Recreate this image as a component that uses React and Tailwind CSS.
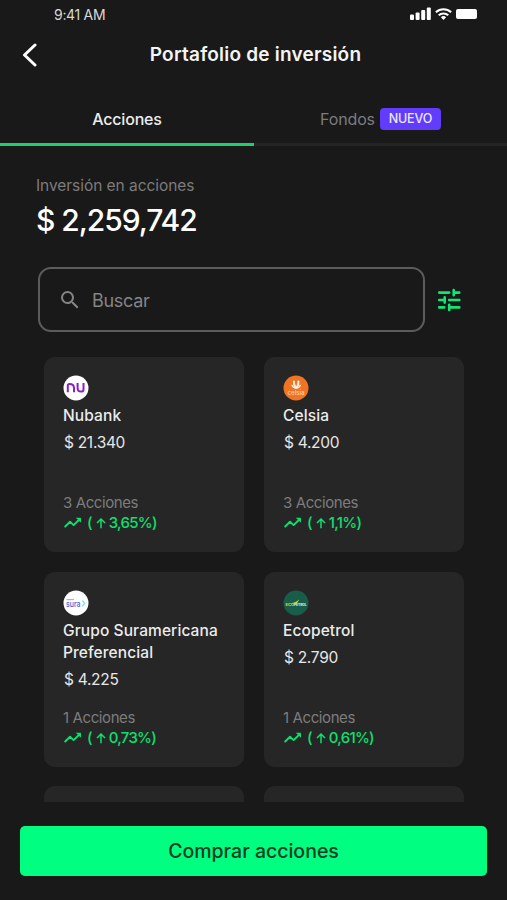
import React from 'react';
import { MdSearch } from 'react-icons/md';

const NuLogo = () => (
  <svg viewBox="0 0 26 26" className="size-[26px]" fill="none" aria-hidden="true">
    <circle cx="13" cy="13" r="12.5" fill="#fff" />
    <path d="M4.8 17.200V10.500c0-1 .6-1.600 1.700-1.600 2.700 0 4.500 1.600 4.500 4.200v4.100" stroke="#8a1fc4" strokeWidth="2" />
    <path d="M14.600 8v5c0 2.400 1.300 3.600 3.300 3.600 1.500 0 2.600-.6 2.600-2.200V8" stroke="#8a1fc4" strokeWidth="2" />
  </svg>
);

const CelsiaLogo = () => (
  <svg viewBox="0 0 26 26" className="size-[26px]" fill="none" aria-hidden="true">
    <circle cx="13" cy="13" r="12.5" fill="#f07424" />
    <g stroke="#fff3e8" strokeLinecap="round">
      <path d="M11 6.500c-.4 2.200.1 4 1.700 6M15.400 6.500c.4 2.200-.1 4-1.700 6" strokeWidth="2" />
      <path d="M9 10.300c.6 1.700 2 2.700 4.200 2.700s3.600-1 4.200-2.700" strokeWidth="1.300" />
    </g>
    <text x="4.500" y="20" fontSize="5.500" fontWeight="500" fill="#ffd0ac" fontFamily="Inter, sans-serif" textLength="17" lengthAdjust="spacingAndGlyphs">celsia</text>
  </svg>
);

const SuraLogo = () => (
  <svg viewBox="0 0 26 26" className="size-[26px]" fill="none" aria-hidden="true">
    <circle cx="13" cy="13" r="12.5" fill="#fff" />
    <path d="M3.500 9.600h7.500" stroke="#a9b2dc" strokeWidth="1.200" />
    <text x="3" y="16.600" fontSize="9" fontWeight="500" fill="#4d5bd2" fontFamily="Inter, sans-serif" textLength="14.500" lengthAdjust="spacingAndGlyphs">sura</text>
    <path d="m19.300 10.600 2.400 2.600-2.400 3.200" stroke="#8edfe4" strokeWidth="1.500" />
  </svg>
);

const EcopetrolLogo = () => (
  <svg viewBox="0 0 26 26" className="size-[26px]" fill="none" aria-hidden="true">
    <circle cx="13" cy="13" r="12.5" fill="#185c49" />
    <path d="M8 13.200c3.500-.4 5.600-1.500 8-3.700-.4 1.700-1.200 2.700-2.200 3.800Z" fill="#c9d530" />
    <text x="2.500" y="15.800" fontSize="3.600" fontWeight="800" fill="#c9d530" fontFamily="Inter, sans-serif" textLength="8.500" lengthAdjust="spacingAndGlyphs">ECO</text>
    <text x="11" y="15.800" fontSize="3.600" fontWeight="800" fill="#e2efdf" fontFamily="Inter, sans-serif" textLength="12.500" lengthAdjust="spacingAndGlyphs">PETROL</text>
  </svg>
);

const TrendIcon = () => (
  <svg viewBox="0 0 18 11" className="mr-[5px] mb-[2px] ml-px h-[11px] w-[18px]" fill="none" aria-hidden="true">
    <path d="M1.200 9.500 6 4.800l3.600 3.300 5-4.800" stroke="currentColor" strokeWidth="1.900" strokeLinecap="round" strokeLinejoin="round" />
    <path d="M11.800.8h4.700c.3 0 .5.200.5.500v4.500Z" fill="currentColor" />
  </svg>
);

const stocks = [
  { name: 'Nubank', price: '21.340', shares: 3, change: '3,65%', Logo: NuLogo },
  { name: 'Celsia', price: '4.200', shares: 3, change: '1,1%', Logo: CelsiaLogo },
  { name: 'Grupo Suramericana Preferencial', price: '4.225', shares: 1, change: '0,73%', Logo: SuraLogo },
  { name: 'Ecopetrol', price: '2.790', shares: 1, change: '0,61%', Logo: EcopetrolLogo },
];

const StockCard = ({ name, price, shares, change, Logo }) => (
  <div className="flex h-[195px] flex-col rounded-[11px] bg-[#262626] pt-[18px] pr-2 pb-[18px] pl-[19px]">
    <Logo />
    <h3 className="mt-[4px] text-[15.500px] leading-[22px] font-medium tracking-[0.100px] text-[#ececec]">{name}</h3>
    <p className="mt-[5px] ml-px text-[15.500px] leading-[22px] tracking-[-0.300px] text-[#e6e6e6]">$ {price}</p>
    <p className="mt-auto text-[15px] leading-[20px] tracking-[-0.400px] text-[#7c7c7c]">{shares} Acciones</p>
    <div className="flex h-[21px] items-center text-[15px] font-medium tracking-[-0.750px] text-[#0ce070]">
      <TrendIcon />
      <span>(</span>
      <svg viewBox="0 0 10 11" className="mr-[3px] ml-[4px] h-[11px] w-[10px]" fill="none" stroke="currentColor" strokeWidth="1.500" aria-hidden="true">
        <path d="M5 10.200V1.200M1 5l4-4 4 4" />
      </svg>
      <span>{change})</span>
    </div>
  </div>
);

const StatusBar = () => (
  <div className="flex h-7 items-center justify-between pr-[30px] pl-[54px]">
    <span className="text-[14px] tracking-[-0.300px] text-[#d8d8d8]">9:41 AM</span>
    <div className="mb-px flex items-center gap-[4px] text-white">
      <svg viewBox="0 0 21 13" className="h-[13px] w-[21px]" fill="currentColor" aria-hidden="true">
        <rect x="0" y="7.500" width="4" height="5.500" rx="1" />
        <rect x="5.600" y="5.500" width="4" height="7.500" rx="1" />
        <rect x="11.200" y="3" width="4" height="10" rx="1" />
        <rect x="16.800" y="0.500" width="4" height="12.500" rx="1" />
      </svg>
      <svg viewBox="0 0 17 12" className="h-[12px] w-[17px]" fill="none" stroke="currentColor" strokeWidth="2" aria-hidden="true">
        <path d="M.9 4.300a11 11 0 0 1 15.200 0M3.700 7.300a7 7 0 0 1 9.600 0" />
        <path d="M5.900 9.200 8.500 12l2.600-2.800a3.900 3.900 0 0 0-5.200 0Z" fill="currentColor" stroke="none" />
      </svg>
      <div className="h-[10px] w-[21px] rounded-[2px] bg-white" />
    </div>
  </div>
);

export default function App() {
  return (
    <div className="flex h-[900px] w-[507px] flex-col overflow-hidden bg-[#191919] font-['Inter',sans-serif]">
      <StatusBar />

      <header className="flex h-[54px] items-center">
        <button className="ml-[22px] flex w-4 justify-center" aria-label="Volver">
          <svg viewBox="0 0 16 24" className="h-6 w-4" fill="none" stroke="#fff" strokeWidth="3" strokeLinecap="round" aria-hidden="true">
            <path d="M13 2 2.500 12 13 22" strokeLinejoin="round" />
          </svg>
        </button>
        <h1 className="flex-1 pr-[34px] text-center text-[19px] font-semibold tracking-[0.220px] text-[#f4f4f4]">Portafolio de inversión</h1>
      </header>

      <nav className="mt-3 flex h-[52px] text-[16px]">
        <button className="w-[254px] border-b-[3px] border-[#1fcd72] font-medium tracking-[-0.200px] text-[#ececec]">Acciones</button>
        <button className="flex flex-1 items-center justify-center gap-[5px] border-b-[3px] border-[#242424] tracking-[-0.150px] text-[#7c7c7c]">
          Fondos
          <span className="flex h-[22px] w-[61px] items-center justify-center rounded-[4px] bg-[#613cfa] pt-px text-[12.500px] font-medium text-[#ece8ff]">NUEVO</span>
        </button>
      </nav>

      <section className="mt-[29px] pl-[36px]">
        <p className="pt-px text-[15.500px] leading-[20px] tracking-[-0.050px] text-[#7c7c7c]">Inversión en acciones</p>
        <p className="mt-[6px] text-[30px] leading-[36px] font-medium tracking-[-1.050px] text-white">$ 2,259,742</p>
      </section>

      <div className="mt-[29px] flex items-center pl-[38px]">
        <label className="flex h-[65px] w-[387px] items-center rounded-[13px] border-2 border-[#5c5c5c] pl-[18px]">
          <MdSearch className="size-6 text-[#868686]" />
          <span className="mt-px ml-[10px] text-[18px] tracking-[-0.300px] text-[#848484]">Buscar</span>
        </label>
        <button className="ml-[12px]" aria-label="Filtros">
          <svg viewBox="0 0 24 24" className="h-6 w-6" fill="none" stroke="#10e676" strokeWidth="2.600" strokeLinecap="round" aria-hidden="true">
            <path d="M2.200 4.600h10M16.700 2v5.200M17.400 4.600h4.900M2.200 12h5M7.700 9.400v5.200M12.200 12h10.100M2.200 19.400h5M12.200 16.800V22M12.900 19.400h9.400" />
          </svg>
        </button>
      </div>

      <main className="mt-[25px] grid h-[445px] shrink-0 auto-rows-min grid-cols-[200px_200px] gap-5 overflow-hidden pl-[44px]">
        {stocks.map(stock => <StockCard key={stock.name} {...stock} />)}
        <div className="-mt-px h-[195px] rounded-[11px] bg-[#262626]" />
        <div className="-mt-px h-[195px] rounded-[11px] bg-[#262626]" />
      </main>

      <button className="mx-5 mt-6 h-[50px] shrink-0 rounded-[5px] bg-[#00ff80] pt-px text-[19.500px] font-medium text-[#083d22]">
        Comprar acciones
      </button>
    </div>
  );
}
